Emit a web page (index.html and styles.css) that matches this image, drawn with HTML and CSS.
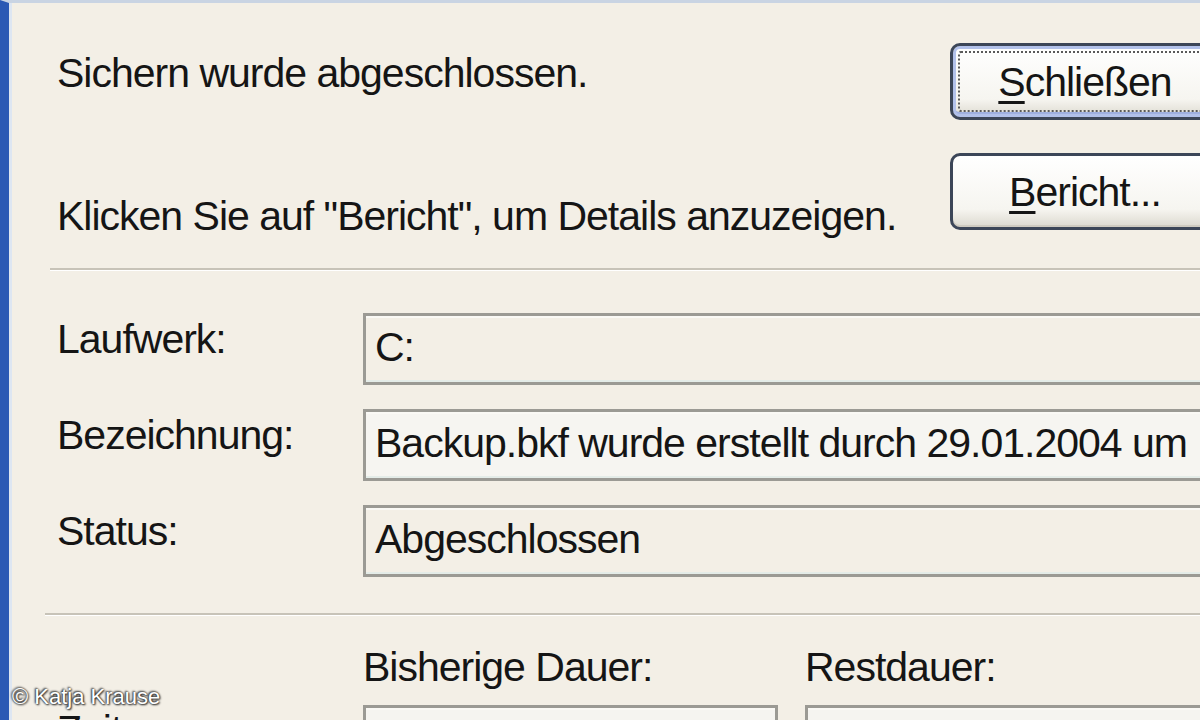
FILE: index.html
```html
<!DOCTYPE html>
<html lang="de">
<head>
    <meta charset="UTF-8">
    <title>Status: Sichern</title>
    <link rel="stylesheet" href="styles.css">
</head>
<body>
    <div class="window">
        <div class="top">
            <div class="messages">
                <p>Sichern wurde abgeschlossen.</p>
                <p>Klicken Sie auf "Bericht", um Details anzuzeigen.</p>
            </div>
            <div class="buttons">
                <button type="button" class="default"><u>S</u>chließen</button>
                <button type="button"><u>B</u>ericht...</button>
            </div>
        </div>

        <div class="separator"></div>

        <div class="fields">
            <span class="label">Laufwerk:</span>
            <div class="field">C:</div>
            <span class="label">Bezeichnung:</span>
            <div class="field light">Backup.bkf wurde erstellt durch 29.01.2004 um</div>
            <span class="label">Status:</span>
            <div class="field">Abgeschlossen</div>
        </div>

        <div class="separator second"></div>

        <div class="times">
            <span></span>
            <span class="head">Bisherige Dauer:</span>
            <span class="head">Restdauer:</span>
            <span class="label">Zeit:</span>
            <div class="field small"></div>
            <div class="field small"></div>
        </div>

        <div class="credit">© Katja Krause</div>
    </div>
</body>
</html>
```

FILE: styles.css
```css
* {
    margin: 0;
    padding: 0;
    box-sizing: border-box;
}

body {
    width: 1200px;
    height: 720px;
    overflow: hidden;
    font-family: "Liberation Sans", Arial, sans-serif;
    font-size: 41px;
    letter-spacing: -1px;
    line-height: 48px;
    color: #151515;
    background: #f3efe6;
}

.window {
    position: relative;
    height: 720px;
    overflow: hidden;
    padding-left: 48px;
    border-left: 9px solid #2b59b4;
    border-top: 3px solid #c9d4e3;
    box-shadow: inset 3px 0 0 #dde6f2;
}

.top {
    display: flex;
    justify-content: space-between;
}

.messages {
    display: flex;
    flex-direction: column;
    gap: 95px;
    padding-top: 46px;
}

.buttons {
    display: flex;
    flex-direction: column;
    gap: 33px;
    padding-top: 40px;
    margin-right: -20px;
}

button {
    position: relative;
    width: 270px;
    height: 77px;
    font: inherit;
    color: inherit;
    letter-spacing: inherit;
    border: 3px solid #3c4658;
    border-radius: 10px;
    background: linear-gradient(#ffffff, #f6f5f0 75%, #dcd9cf);
    box-shadow: inset 0 -2px 0 #cfcbc0;
}

button u {
    text-decoration-thickness: 3px;
    text-underline-offset: 5px;
}

button.default {
    box-shadow: inset 0 0 0 3px #b2c1ea, inset 0 -5px 0 #9fb0e0;
}

button.default::after {
    content: "";
    position: absolute;
    inset: 5px;
    border: 2px dotted #5a5a5a;
    border-radius: 3px;
}

.separator {
    margin: 28px 0 0 -7px;
    border-top: 2px solid #c7c3b8;
    border-bottom: 1px solid #ffffff;
}

.separator.second {
    margin-top: 36px;
    margin-left: -12px;
}

.fields {
    display: grid;
    grid-template-columns: 306px 1fr;
    row-gap: 24px;
    margin-top: 42px;
    margin-right: -20px;
}

.label {
    padding-top: 2px;
}

.field {
    height: 72px;
    padding: 7px 9px;
    white-space: nowrap;
    overflow: hidden;
    border: 3px solid #9b9a94;
    box-shadow: inset 0 2px 0 #faf9f5, inset 0 -2px 0 #e4ece8;
}

.field.light {
    background: #f6f5f1;
}

.times {
    display: grid;
    grid-template-columns: 279px 415px 1fr;
    column-gap: 27px;
    row-gap: 14px;
    margin-top: 27px;
    margin-right: -20px;
}

.times .label {
    padding-top: 1px;
}

.field.small {
    background: #f5f4f0;
}

.credit {
    position: absolute;
    left: 3px;
    top: 681px;
    font-size: 22px;
    letter-spacing: 0;
    line-height: 26px;
    color: #ffffff;
    text-shadow: 0 0 2px #333, 1px 1px 2px #222, -1px -1px 2px #444;
}
```
